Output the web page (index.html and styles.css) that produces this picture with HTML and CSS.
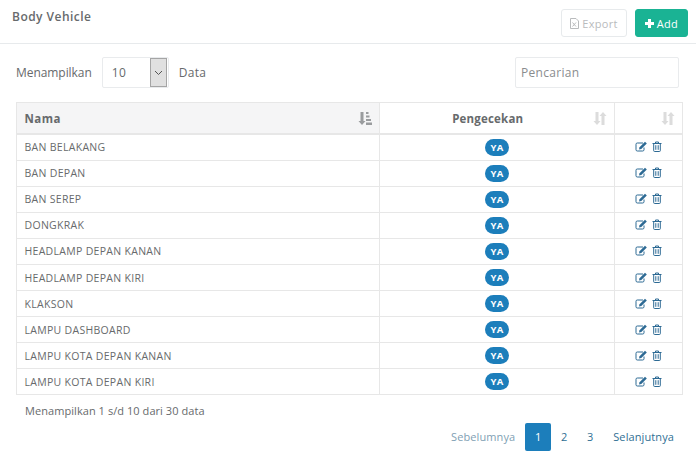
FILE: index.html
```html
<!DOCTYPE html>
<html lang="id">
<head>
  <meta charset="UTF-8">
  <title>Body Vehicle</title>
  <link rel="stylesheet" href="styles.css">
</head>
<body>
  <svg class="defs" width="0" height="0">
    <symbol id="sort-off" viewBox="0 0 14 13"><path d="M2.500 0h3v9h2L4 13 .5 9h2zM8.500 13h3V4h2L10 0 6.500 4h2z"/></symbol>
    <symbol id="edit" viewBox="0 0 13 11"><path d="M9 6.500v2.200A1.300 1.300 0 0 1 7.700 10H2.300A1.300 1.300 0 0 1 1 8.700V3.300A1.300 1.300 0 0 1 2.300 2H8" fill="none" stroke="currentColor"/><path d="M4.500 6.200 10 .8l1.800 1.800-5.500 5.500-2.300.4z"/></symbol>
    <symbol id="trash" viewBox="0 0 10 11"><path d="M.5 2.500h9M3.500 2.500V1h3v1.500M1.700 2.500v7.200q0 .8.800.8h5q.8 0 .8-.8V2.500M3.800 4.200v4.600M6.200 4.200v4.600" fill="none" stroke="currentColor"/></symbol>
  </svg>

  <header class="top">
    <h1>Body Vehicle</h1>
    <div class="actions">
      <button class="btn btn-export">
        <svg width="9" height="11" viewBox="0 0 9 11"><path d="M.5.500h5.500l2.500 2.500v7.500h-8zM2.500 4.500l3.500 4M6 4.500l-3.500 4" fill="none" stroke="currentColor"/></svg>
        Export
      </button>
      <button class="btn btn-add">
        <svg width="9" height="9" viewBox="0 0 9 9"><path d="M3 0h3v3h3v3H6v3H3V6H0V3h3z" fill="currentColor"/></svg>
        Add
      </button>
    </div>
  </header>

  <section class="tools">
    <div class="length">
      <span class="length-label">Menampilkan</span>
      <div class="select">
        <span class="select-val">10</span>
        <span class="select-arrow"><svg width="9" height="6" viewBox="0 0 9 6"><path d="M1 1l3.500 3.500L8 1" fill="none" stroke="#555"/></svg></span>
      </div>
      <span>Data</span>
    </div>
    <div class="search">Pencarian</div>
  </section>

  <table class="grid">
    <thead>
      <tr>
        <th class="col-name">Nama<svg class="sort sort-on" width="14" height="13" viewBox="0 0 14 13"><path d="M2.500 0h3v9h2L4 13 .5 9h2zM8 0h2.500v2H8zM8 3.500h3.500v2H8zM8 7h5v2H8zM8 10.500h6V13H8z"/></svg></th>
        <th class="col-check">Pengecekan<svg class="sort" width="14" height="13"><use href="#sort-off"/></svg></th>
        <th class="col-act"><svg class="sort" width="14" height="13"><use href="#sort-off"/></svg></th>
      </tr>
    </thead>
    <tbody id="rows"></tbody>
  </table>

  <footer class="foot">
    <div class="info">Menampilkan 1 s/d 10 dari 30 data</div>
    <nav class="pager">
      <a class="off">Sebelumnya</a>
      <a class="page current">1</a>
      <a class="page">2</a>
      <a class="page">3</a>
      <a>Selanjutnya</a>
    </nav>
  </footer>

  <script>
    const names = ["BAN BELAKANG", "BAN DEPAN", "BAN SEREP", "DONGKRAK", "HEADLAMP DEPAN KANAN",
      "HEADLAMP DEPAN KIRI", "KLAKSON", "LAMPU DASHBOARD", "LAMPU KOTA DEPAN KANAN", "LAMPU KOTA DEPAN KIRI"];
    const tbody = document.getElementById("rows");
    names.forEach(name => {
      const tr = document.createElement("tr");
      tr.innerHTML = `
        <td>${name}</td>
        <td class="center"><span class="badge">YA</span></td>
        <td class="center icons"><svg width="13" height="11"><use href="#edit"/></svg><svg width="10" height="11"><use href="#trash"/></svg></td>
      `;
      tbody.appendChild(tr);
    });
  </script>
</body>
</html>
```

FILE: styles.css
```css
* { box-sizing: border-box; }
body { margin: 0; background: #fff; color: #676a6c; font-family: "Open Sans", sans-serif; font-size: 11px; letter-spacing: .3px; overflow: hidden; }
.defs { position: absolute; }

.top { display: flex; justify-content: space-between; height: 44px; padding: 9px 8px 0 12px; border-bottom: 1px solid #e7eaec; }
h1 { margin: 0; font-size: 12px; font-weight: 600; line-height: 16px; letter-spacing: .47px; }
.actions { display: flex; gap: 8px; height: 28px; }
.btn { display: flex; align-items: center; justify-content: center; gap: 3px; height: 28px; padding: 0; border-radius: 3px; font: inherit; letter-spacing: .3px; }
.btn-export { width: 66px; background: #fff; border: 1px solid #e7eaec; color: #b9bbbd; }
.btn-add { width: 53px; background: #1ab394; border: 1px solid #1ab394; color: #fff; }

.tools { display: flex; justify-content: space-between; padding: 13px 17px 14px 16px; height: 58px; }
.length { display: flex; align-items: center; gap: 10px; font-size: 12px; }
.length-label { letter-spacing: -.06px; }
.select { display: flex; width: 67px; height: 31px; border: 1px solid #e9ebed; border-radius: 2px; }
.select-val { flex: 1; padding-left: 9px; line-height: 29px; }
.select-arrow { display: flex; align-items: center; justify-content: center; width: 17px; height: 29px; margin-right: 1px; background: #e0e0e0; border: 1px solid #a5a5a5; }
.search { width: 164px; height: 31px; padding-left: 5px; border: 1px solid #e9ebed; border-radius: 2px; font-size: 12px; line-height: 29px; color: #8a8c8e; }

.grid { width: 667px; margin-left: 16px; border-collapse: collapse; table-layout: fixed; }
.grid th, .grid td { border: 1px solid #e7e7e7; padding: 0 7.500px; }
.grid th { position: relative; height: 31.500px; background: #fff; border-bottom-width: 2px; font-size: 11.500px; font-weight: 700; color: #676a6c; letter-spacing: .2px; text-align: center; }
.grid th.col-name { width: 363px; background: #f5f5f6; text-align: left; letter-spacing: .5px; }
.grid th.col-check { width: 235px; padding-right: 26px; }
.grid td { height: 26.100px; font-size: 10.500px; }
.center { text-align: center; }
.sort { position: absolute; right: 7px; top: 9px; fill: #dcdcdc; }
.sort-on { fill: #9a9c9e; }
.badge { display: inline-block; width: 24px; height: 17px; border-radius: 8.500px; background: #1c7ebb; color: #fff; font-size: 9.500px; font-weight: 700; line-height: 17px; text-align: center; vertical-align: middle; }
.icons svg { color: #2d6a94; fill: #2d6a94; vertical-align: -1px; }
.icons svg + svg { margin-left: 4px; }

.foot { padding: 0 12px 0 25px; }
.info { height: 28px; padding-top: 8px; line-height: 15px; letter-spacing: .06px; }
.pager { display: flex; justify-content: flex-end; align-items: center; height: 28px; color: #2f6f94; letter-spacing: .1px; }
.pager a { padding: 0 10px; line-height: 28px; }
.pager .off { color: #7f9fb4; }
.pager .page { width: 26px; padding: 0; text-align: center; }
.pager .current { background: #1c7ebb; color: #fff; border-radius: 2px; }
```
